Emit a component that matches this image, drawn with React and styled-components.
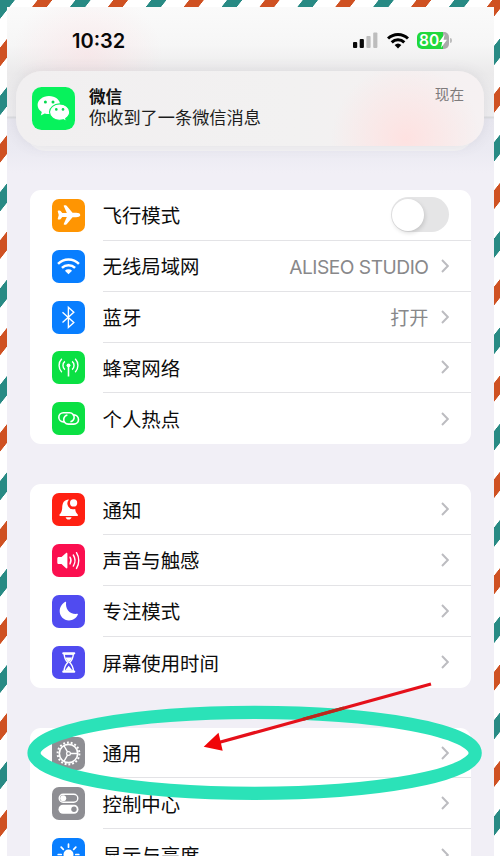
import React from "react";
import styled, { createGlobalStyle } from "styled-components";
import { IoAirplane } from "react-icons/io5";

const GlobalStyle = createGlobalStyle`
  * {
    box-sizing: border-box;
  }

  body {
    margin: 0;
    background-color: #ffffff;
    font-family: Inter, "Noto Sans CJK SC", sans-serif;
  }
`;

const Frame = styled.div`
  position: relative;
  width: 500px;
  height: 856px;
  padding: 7px 6px 0 7px;
  overflow: hidden;
  background: repeating-linear-gradient(
    128.2deg,
    #288a84 0,
    #288a84 11.4px,
    #ffffff 12px,
    #ffffff 29.2px,
    #cf5122 29.8px,
    #cf5122 40.8px,
    #ffffff 41.4px,
    #ffffff 59px,
    #288a84 59.56px
  );
`;

const Screen = styled.div`
  height: 849px;
  overflow: hidden;
  background-color: #f1eff6;
`;

const Header = styled.div`
  height: 183px;
  background:
    radial-gradient(
      ellipse 75px 60px at 80px 46px,
      rgba(255, 210, 215, 0.32),
      rgba(255, 220, 225, 0)
    ),
    linear-gradient(
      #fafafa 0,
      #f6f6f6 38px,
      #ebeaeb 66px,
      #eeedef 109px,
      #dadbde 110px,
      #dcdde1 111px,
      #e8e7ef 112px,
      #ebeaf2 142px,
      #f1eff6 166px
    );
`;

const StatusBar = styled.div`
  display: flex;
  justify-content: space-between;
  align-items: center;
  height: 64px;
  padding: 3px 42px 0 65px;
`;

const Clock = styled.div`
  font-size: 20px;
  font-weight: 600;
  line-height: 24px;
  color: #080808;
`;

const StatusIcons = styled.div`
  display: flex;
  align-items: center;
  gap: 8.5px;
`;

const Battery = styled.div`
  display: flex;
  align-items: center;
  gap: 1px;

  &::after {
    content: "";
    width: 2px;
    height: 5px;
    border-radius: 0 2px 2px 0;
    background-color: #bdbdbd;
  }
`;

const BatteryBody = styled.div`
  display: flex;
  align-items: center;
  width: 32px;
  height: 17px;
  padding-left: 2px;
  border-radius: 5px;
  background: linear-gradient(90deg, #20d83c 82%, #aaaaaa 82%);
  color: #ffffff;
  font-size: 15.5px;
  font-weight: 600;
  line-height: 17px;
`;

const BannerLayer = styled.div`
  position: relative;
  z-index: 0;
  isolation: isolate;
`;

const Banner = styled.div`
  position: relative;
  display: flex;
  width: 468px;
  height: 75px;
  margin-left: 9px;
  padding: 16px 20px 0 16px;
  border-radius: 26px;
  background:
    radial-gradient(
      circle 75px at 390px 68px,
      rgba(255, 224, 223, 0.9),
      rgba(255, 232, 232, 0)
    ),
    linear-gradient(90deg, #f1eff0, #f2f1f1 60%, #f6f1f2);
  box-shadow: 0 0 14px rgba(80, 80, 100, 0.1);

  /* second notification peeking out of the stack */
  &::after {
    content: "";
    position: absolute;
    z-index: -1;
    left: 10px;
    right: 10px;
    bottom: -5px;
    height: 40px;
    border-radius: 22px;
    background-color: #f3f2f4;
  }
`;

const BannerText = styled.div`
  flex: 1;
  margin-left: 14px;
`;

const BannerTitle = styled.div`
  font-size: 16.6px;
  font-weight: 700;
  line-height: 20px;
  color: #111111;
`;

const BannerMessage = styled.div`
  font-size: 17.2px;
  line-height: 21px;
  color: #1c1c1c;
`;

const BannerTime = styled.div`
  font-size: 14.6px;
  line-height: 17px;
  color: #7e7b7c;
`;

const Groups = styled.div`
  display: flex;
  flex-direction: column;
  gap: 40px;
  padding: 0 23px;
`;

const Group = styled.div`
  flex: none;
  border-radius: 11px;
  background-color: #ffffff;
`;

const Row = styled.div`
  display: flex;
  align-items: center;
  height: 50.85px;
  padding-left: 22px;
`;

const IconBox = styled.div`
  display: flex;
  justify-content: center;
  align-items: center;
  flex: none;
  width: 33px;
  height: 33px;
  border-radius: 7px;
  background-color: ${(props) => props.$color};
  color: #ffffff;
`;

const RowBody = styled.div`
  display: flex;
  align-items: center;
  flex: 1;
  height: 100%;
  margin-left: 17.5px;
  padding-right: 22.5px;
  border-bottom: ${(props) => (props.$last ? "none" : "1px solid #e3e3e6")};
`;

const Label = styled.div`
  flex: 1;
  padding-top: 3px;
  font-size: 19.4px;
  line-height: 28px;
  color: #0c0c0c;
`;

const Value = styled.div`
  margin-right: 12px;
  padding-top: 3px;
  font-size: 19.2px;
  line-height: 28px;
  letter-spacing: ${(props) => props.$spacing || "0"};
  color: #88888a;
`;

const Switch = styled.div`
  width: 58px;
  height: 35px;
  padding: 1.5px;
  border-radius: 18px;
  background-color: #e5e5e6;
`;

const Knob = styled.div`
  width: 32px;
  height: 32px;
  border-radius: 50%;
  background-color: #ffffff;
  box-shadow: 1px 2px 4px rgba(0, 0, 0, 0.14);
`;

const Marker = styled.svg`
  position: absolute;
  left: 0;
  top: 0;
  pointer-events: none;
`;

const Chevron = () => (
  <svg width="8" height="14" viewBox="0 0 8 14" fill="none">
    <path d="M1 1l5.8 6L1 13" stroke="#bcbcc0" strokeWidth="1.9" />
  </svg>
);

const SignalIcon = () => (
  <svg width="25" height="17" viewBox="0 0 25 17">
    <rect x="0" y="10" width="4.2" height="6" rx="1" fill="#080808" />
    <rect x="6.7" y="7" width="4.2" height="9" rx="1" fill="#080808" />
    <rect x="13.4" y="4" width="4.2" height="12" rx="1" fill="#bdbdbd" />
    <rect x="20.2" y="0.5" width="4.2" height="15.5" rx="1" fill="#bdbdbd" />
  </svg>
);

const WifiIcon = ({ width = 22, stroke = 3 }) => (
  <svg width={width} height={(width * 17) / 22} viewBox="0 0 22 17" fill="none">
    <path
      d="M1 6.5a14.2 14.2 0 0 1 20 0M4.7 10.4a9 9 0 0 1 12.6 0"
      stroke="currentColor"
      strokeWidth={stroke}
    />
    <path d="M7.6 13.1a5 5 0 0 1 6.8 0L11 16.6z" fill="currentColor" />
  </svg>
);

const BoltIcon = () => (
  <svg width="8" height="14" viewBox="0 0 8 14">
    <path d="M5.8 0L0 8h3.3L2 14l6-8.2H4.5z" fill="#ffffff" />
  </svg>
);

const WechatIcon = () => (
  <svg width="43" height="43" viewBox="0 0 43 43">
    <rect width="43" height="43" rx="9.5" fill="#07f25c" />
    <path
      d="M17 9C10.7 9 5.6 13 5.6 18c0 2.9 1.6 5.3 4.2 7l-1 3.5 3.9-2c1.3.4 2.8.6 4.3.6 6.3 0 11.3-4 11.3-9.1S23.300 9 17 9z"
      fill="#ffffff"
    />
    <path
      d="M27.6 16.9c-5.6 0-10.1 3.7-10.1 8.2s4.5 8.1 10.1 8.1c1.3 0 2.5-.2 3.600-.5l3.3 1.8-.8-3c2.4-1.5 4-3.8 4-6.400 0-4.5-4.5-8.2-10.1-8.2z"
      fill="#ffffff"
      stroke="#07f25c"
      strokeWidth="1.1"
    />
    <g fill="#07d950">
      <circle cx="13.4" cy="15.1" r="1.5" />
      <circle cx="21" cy="15.1" r="1.5" />
      <circle cx="24.3" cy="22.4" r="1.3" />
      <circle cx="31" cy="22.4" r="1.3" />
    </g>
  </svg>
);

const Glyph = ({ children }) => (
  <svg
    width="33"
    height="33"
    viewBox="0 0 33 33"
    fill="none"
    stroke="#ffffff"
    strokeWidth="1.4"
  >
    {children}
  </svg>
);

const BluetoothIcon = () => (
  <Glyph>
    <path d="M10.5 11.2l11.3 10.3-5.4 4.9V6.3l5.4 4.9-11.3 10.3" />
  </Glyph>
);

const AntennaIcon = () => (
  <Glyph>
    <circle cx="16.5" cy="14.3" r="1.9" fill="#ffffff" stroke="none" />
    <path d="M16.5 14v11.5" strokeWidth="1.6" />
    <path d="M12.9 18.6a5.3 5.3 0 0 1 0-8.2M20.1 18.6a5.3 5.3 0 0 0 0-8.2" />
    <path d="M9.8 21.2a9.6 9.6 0 0 1 0-13.4M23.2 21.2a9.6 9.6 0 0 0 0-13.4" />
  </Glyph>
);

const HotspotIcon = () => (
  <Glyph>
    <path
      d="M12.6 19.9h-1.200a4.600 4.600 0 0 1 0-9.200h6.200a4.600 4.600 0 0 1 4.500 5.500c-.4 2-1.700 3.200-3.700 3.600"
      strokeWidth="1.6"
    />
    <path
      d="M20.800 12.900h1.100a4.600 4.600 0 0 1 0 9.200h-5.600a4.600 4.600 0 0 1-4.500-5.500c.4-2 1.600-3.200 3.600-3.600"
      strokeWidth="1.6"
    />
  </Glyph>
);

const BellIcon = () => (
  <Glyph>
    <path
      d="M17 6.500c-5 .1-6.600 3.500-6.800 8.200-.1 3.300-1 5-2.600 6.700-.6.700-.2 1.600.7 1.600h16.800c.9 0 1.200-.9.600-1.600-1.400-1.500-2.300-2.900-2.500-5.500A5.800 5.800 0 0 1 17 6.500zM13.600 24.200h6c-.5 1.600-1.600 2.300-3 2.300s-2.500-.7-3-2.300z"
      fill="#ffffff"
      stroke="none"
    />
    <circle cx="21.6" cy="9.9" r="3.6" fill="#ffffff" stroke="none" />
  </Glyph>
);

const SpeakerIcon = () => (
  <Glyph>
    <path
      d="M5.300 14.600c0-1 .5-1.500 1.500-1.500h2.700l4.300-3.900c.9-.8 1.600-.4 1.600.6v13.600c0 1-.8 1.400-1.600.6l-4.300-3.900H6.800c-1 0-1.500-.5-1.500-1.500z"
      fill="#ffffff"
      stroke="none"
    />
    <path
      d="M18 13.200c1.200 2 1.200 4.700 0 6.700M21.300 11c2.100 3.300 2.100 7.800 0 11.100M24.500 8.700c3 4.700 3 11.100 0 15.700"
      strokeLinecap="round"
    />
  </Glyph>
);

const MoonIcon = () => (
  <Glyph>
    <path
      d="M14.100 7.200c-.9 6.900 3.400 12.400 11.300 11.600.4 0 .6.400.5.800-1.500 3.700-4.900 5.800-8.900 5.800-5.300 0-9.300-4-9.300-9.100 0-4.100 2.200-7.700 5.700-9.500.4-.2.800 0 .7.400z"
      fill="#ffffff"
      stroke="none"
    />
  </Glyph>
);

const HourglassIcon = () => (
  <Glyph>
    <path
      d="M11.300 7.300h10.900M11.300 25.700h10.900"
      strokeWidth="2.200"
      strokeLinecap="round"
    />
    <path d="M12.200 8c0 4.500 1.200 6 3.600 8.500-2.400 2.500-3.600 4-3.600 8.500h9.100c0-4.500-1.200-6-3.600-8.500 2.400-2.500 3.600-4 3.600-8.500z" />
    <path
      d="M13.500 11.500h6.500c-.5 1.800-1.600 3-3.300 4.700v3.500l3.600 4.500h-7.200l3.600-4.500v-3.500c-1.500-1.700-2.600-2.900-3.200-4.700z"
      fill="#ffffff"
      stroke="none"
    />
  </Glyph>
);

const GearIcon = () => (
  <Glyph>
    <circle cx="16.5" cy="16.5" r="9.2" strokeWidth="1.7" />
    <circle
      cx="16.5"
      cy="16.5"
      r="10.9"
      strokeWidth="2"
      strokeDasharray="1.9 1.905"
    />
    <circle cx="16.5" cy="16.5" r="1.9" strokeWidth="1.2" />
    <path d="M18.4 16.5h7.2M15.5 14.8l-3.6-6.3M15.5 18.2l-3.6 6.3" />
  </Glyph>
);

const ControlsIcon = () => (
  <Glyph>
    <rect x="7.2" y="7.3" width="18.6" height="8" rx="4" />
    <circle cx="11.2" cy="11.3" r="3" fill="#ffffff" stroke="none" />
    <rect
      x="6.5"
      y="17.7"
      width="20"
      height="9"
      rx="4.5"
      fill="#ffffff"
      stroke="none"
    />
    <circle cx="22" cy="22.2" r="2.7" fill="#8e8e93" stroke="none" />
  </Glyph>
);

const SunIcon = () => (
  <Glyph>
    <circle cx="16.5" cy="16.5" r="5" fill="#ffffff" stroke="none" />
    <path
      d="M16.5 6.2v3M16.5 23.8v3M6.2 16.5h3M23.8 16.5h3M9.2 9.2l2.1 2.1M21.700 21.700l2.100 2.100M9.200 23.800l2.100-2.100M21.700 11.300l2.100-2.100"
      strokeWidth="1.7"
      strokeLinecap="round"
    />
  </Glyph>
);

const groups = [
  [
    {
      label: "飞行模式",
      color: "#ff9502",
      icon: <IoAirplane size={24} />,
      toggle: true,
    },
    {
      label: "无线局域网",
      color: "#087eff",
      icon: <WifiIcon width={23} stroke={2.4} />,
      value: "ALISEO STUDIO",
      spacing: "-0.5px",
    },
    { label: "蓝牙", color: "#087eff", icon: <BluetoothIcon />, value: "打开" },
    { label: "蜂窝网络", color: "#0be043", icon: <AntennaIcon /> },
    { label: "个人热点", color: "#0be043", icon: <HotspotIcon /> },
  ],
  [
    { label: "通知", color: "#ff2012", icon: <BellIcon /> },
    { label: "声音与触感", color: "#fb0f4f", icon: <SpeakerIcon /> },
    { label: "专注模式", color: "#504bf0", icon: <MoonIcon /> },
    { label: "屏幕使用时间", color: "#504bf0", icon: <HourglassIcon /> },
  ],
  [
    { label: "通用", color: "#8e8e93", icon: <GearIcon /> },
    { label: "控制中心", color: "#8e8e93", icon: <ControlsIcon /> },
    { label: "显示与亮度", color: "#087eff", icon: <SunIcon /> },
  ],
];

function SettingsRow({ item, last }) {
  return (
    <Row>
      <IconBox $color={item.color}>{item.icon}</IconBox>
      <RowBody $last={last}>
        <Label>{item.label}</Label>
        {item.value && <Value $spacing={item.spacing}>{item.value}</Value>}
        {item.toggle ? (
          <Switch>
            <Knob />
          </Switch>
        ) : (
          <Chevron />
        )}
      </RowBody>
    </Row>
  );
}

function Notification() {
  return (
    <BannerLayer>
      <Banner>
        <WechatIcon />
        <BannerText>
          <BannerTitle>微信</BannerTitle>
          <BannerMessage>你收到了一条微信消息</BannerMessage>
        </BannerText>
        <BannerTime>现在</BannerTime>
      </Banner>
    </BannerLayer>
  );
}

function App() {
  return (
    <>
      <GlobalStyle />
      <Frame>
        <Screen>
          <Header>
            <StatusBar>
              <Clock>10:32</Clock>
              <StatusIcons>
                <SignalIcon />
                <WifiIcon />
                <Battery>
                  <BatteryBody>
                    80
                    <BoltIcon />
                  </BatteryBody>
                </Battery>
              </StatusIcons>
            </StatusBar>
            <Notification />
          </Header>
          <Groups>
            {groups.map((rows, index) => (
              <Group key={index}>
                {rows.map((item, i) => (
                  <SettingsRow
                    key={item.label}
                    item={item}
                    last={i === rows.length - 1}
                  />
                ))}
              </Group>
            ))}
          </Groups>
        </Screen>
        <Marker width="500" height="856" viewBox="0 0 500 856" fill="none">
          <ellipse
            cx="254.6"
            cy="752.9"
            rx="220.6"
            ry="40.5"
            stroke="#2be2b8"
            strokeWidth="13.2"
          />
          <path d="M431 684L216 743.3" stroke="#e5101a" strokeWidth="3.2" />
          <path d="M303 719.3L344 708" stroke="#b9291d" strokeWidth="3.2" />
          <path d="M203.7 746.7l14.8-14 4.2 18z" fill="#f00508" />
        </Marker>
      </Frame>
    </>
  );
}

export default App;
